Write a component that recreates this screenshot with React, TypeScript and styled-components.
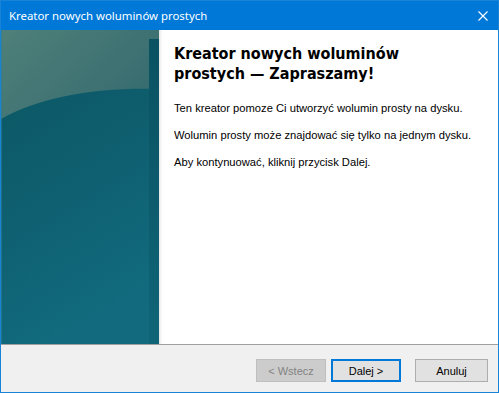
import React from 'react';
import styled, { createGlobalStyle } from 'styled-components';

const Global = createGlobalStyle`
  html, body {
    margin: 0;
    padding: 0;
    overflow: hidden;
    background: #ffffff;
  }
`;

const Window = styled.div`
  width: 499px;
  height: 393px;
  box-sizing: border-box;
  border: 1px solid #1883d7;
  display: flex;
  flex-direction: column;
  background: #f0f0f0;
`;

const TitleBar = styled.div`
  height: 29px;
  flex: none;
  background: #0078d7;
  display: flex;
  align-items: center;
  justify-content: space-between;
  padding-left: 8px;
  color: #ffffff;
  font-family: 'Noto Sans', 'Open Sans', sans-serif;
  font-size: 11.4px;
`;

const CloseBox = styled.div`
  width: 30px;
  height: 29px;
  display: flex;
  align-items: center;
  justify-content: center;
`;

const Main = styled.div`
  height: 314px;
  flex: none;
  display: flex;
  background: #ffffff;
`;

const SidePanel = styled.div`
  width: 158px;
  flex: none;
  display: flex;
`;

const Content = styled.div`
  flex: 1;
  padding: 14px 16px 0 15px;
  background: linear-gradient(to right, #e4e4e4 0px, #f7f7f7 2px, #ffffff 4px);
`;

const Heading = styled.h1`
  margin: 0 0 17px 0;
  font-family: 'DejaVu Sans', Verdana, sans-serif;
  font-stretch: condensed;
  font-weight: bold;
  font-size: 16px;
  line-height: 20px;
  color: #000000;
`;

const Para = styled.p`
  margin: 0 0 13px 0;
  font-family: 'Liberation Sans', Arial, sans-serif;
  font-size: 11.2px;
  line-height: 14px;
  color: #000000;
`;

const Footer = styled.div`
  flex: 1;
  border-top: 1px solid #a0a0a0;
  background: #f0f0f0;
  display: flex;
  align-items: flex-start;
  justify-content: flex-end;
  padding: 14px 10px 0 0;
`;

const ButtonGroup = styled.div<{ $gap: number }>`
  display: flex;
  gap: ${(p) => p.$gap}px;
  margin-left: 14px;
`;

const Button = styled.button<{ $default?: boolean; $w?: number }>`
  width: ${(p) => p.$w ?? 70}px;
  height: 23px;
  box-sizing: border-box;
  padding: 0;
  background: #e1e1e1;
  border: 1px solid ${(p) => (p.$default ? '#0078d7' : '#adadad')};
  box-shadow: ${(p) => (p.$default ? 'inset 0 0 0 1px #0078d7' : 'none')};
  font-family: 'Liberation Sans', Arial, sans-serif;
  font-size: 11px;
  color: #000000;
  &:disabled {
    background: #cccccc;
    border-color: #bfbfbf;
    color: #838383;
  }
`;

const SideArt = () => (
  <svg width="158" height="314" viewBox="0 0 158 314">
    <defs>
      <linearGradient id="dark" x1="0" y1="0" x2="0.3" y2="1">
        <stop offset="0" stopColor="#0b5462" />
        <stop offset="0.5" stopColor="#0e5e6e" />
        <stop offset="1" stopColor="#116a7d" />
      </linearGradient>
      <linearGradient id="light" x1="0" y1="0" x2="1" y2="0.6">
        <stop offset="0" stopColor="#4f8079" />
        <stop offset="1" stopColor="#376c70" />
      </linearGradient>
      <linearGradient id="strip" x1="0" y1="0" x2="0" y2="1">
        <stop offset="0" stopColor="#0a5262" />
        <stop offset="1" stopColor="#0f6577" />
      </linearGradient>
    </defs>
    <rect x="0" y="0" width="158" height="314" fill="url(#dark)" />
    <path d="M0 0 H158 V59 C100 57 40 66 0 89 Z" fill="url(#light)" />
    <rect x="148" y="9" width="10" height="305" fill="url(#strip)" />
    <rect x="0" y="0" width="1" height="314" fill="#2a7f95" opacity="0.6" />
  </svg>
);

export default function App() {
  return (
    <>
      <Global />
      <Window>
        <TitleBar>
          <span>Kreator nowych woluminów prostych</span>
          <CloseBox>
            <svg width="10" height="10" viewBox="0 0 10 10">
              <path d="M0.5 0.5 L9.5 9.5 M9.5 0.5 L0.5 9.5" stroke="#ffffff" strokeWidth="1.1" />
            </svg>
          </CloseBox>
        </TitleBar>
        <Main>
          <SidePanel>
            <SideArt />
          </SidePanel>
          <Content>
            <Heading>
              Kreator nowych woluminów
              <br />
              prostych — Zapraszamy!
            </Heading>
            <Para>Ten kreator pomoze Ci utworzyć wolumin prosty na dysku.</Para>
            <Para>Wolumin prosty może znajdować się tylko na jednym dysku.</Para>
            <Para>Aby kontynuować, kliknij przycisk Dalej.</Para>
          </Content>
        </Main>
        <Footer>
          <ButtonGroup $gap={5}>
            <Button disabled>&lt; Wstecz</Button>
            <Button $default>Dalej &gt;</Button>
          </ButtonGroup>
          <ButtonGroup $gap={0}>
            <Button $w={73}>Anuluj</Button>
          </ButtonGroup>
        </Footer>
      </Window>
    </>
  );
}
